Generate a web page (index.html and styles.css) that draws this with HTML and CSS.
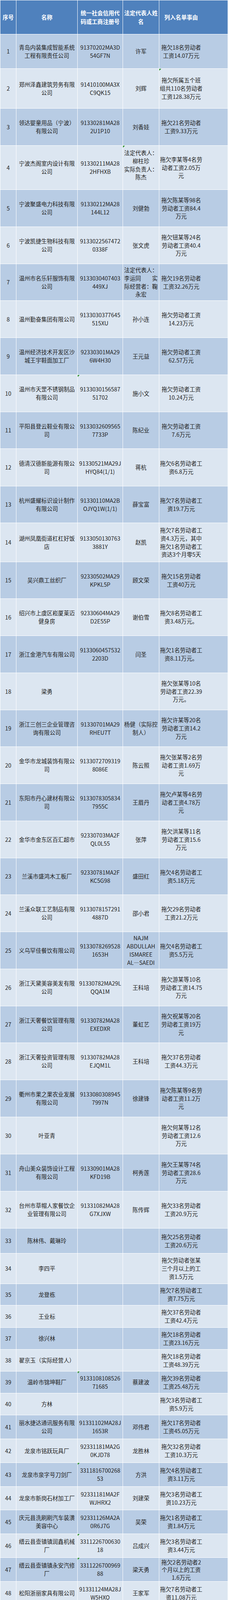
FILE: index.html
```html
<!DOCTYPE html>
<html lang="zh-CN">
<head>
<meta charset="utf-8">
<title>拖欠劳动者工资名单</title>
<link rel="stylesheet" href="styles.css">
</head>
<body>
<table class="sheet">
  <colgroup>
    <col class="k1"><col class="k2"><col class="k3"><col class="k4"><col class="k5">
  </colgroup>
  <thead>
    <tr class="head">
      <th>序号</th>
      <th>名称</th>
      <th>统一社会信用代<br>码或工商注册号</th>
      <th>法定代表人姓<br>名</th>
      <th class="c5">列入名单事由</th>
    </tr>
  </thead>
  <tbody>
    <tr class="odd h87"><td>1</td><td>青岛内装集成智能系统<br>工程有限责任公司</td><td>91370202MA3D<br>54GF7N</td><td>许军</td><td class="c5">拖欠18名劳动者<br>工资14.07万元</td></tr>
    <tr class="even h101"><td>2</td><td>郑州泽鑫建筑劳务有限<br>公司</td><td>91410100MA3X<br>C9QK15</td><td>刘辉</td><td class="c5 flag">拖欠所属五个班<br>组共110名劳动者<br>工资128.38万元</td></tr>
    <tr class="odd h94"><td>3</td><td>领达婴童用品（宁波）<br>有限公司</td><td>91330281MA28<br>2U1P10</td><td>刘香娃</td><td class="c5">拖欠21名劳动者<br>工资9.33万元</td></tr>
    <tr class="even h99"><td>4</td><td>宁波杰阁室内设计有限<br>公司</td><td>91330211MA28<br>2HFHXB</td><td class="flag lift">法定代表人：<br>柳柱珍<br>实际负责人：<br>陈杰</td><td class="c5">拖欠李某等4名劳<br>动者工资2.05万<br>元</td></tr>
    <tr class="odd h94"><td>5</td><td>宁波聚盛电力科技有限<br>公司</td><td>91330212MA28<br>144L12</td><td>刘健勃</td><td class="c5">拖欠陈某等98名<br>劳动者工资84.4<br>万元</td></tr>
    <tr class="even h94"><td>6</td><td>宁波凯捷生物科技有限<br>公司</td><td>9133022567472<br>0338F</td><td>张文虎</td><td class="c5">拖欠钮某等24名<br>劳动者工资40.4<br>万元</td></tr>
    <tr class="odd h93"><td>7</td><td>温州市名乐轩服饰有限<br>公司</td><td>9133030407403<br>449XJ</td><td>法定代表人：<br>李运同　　实<br>际经营者：鞠<br>永宏</td><td class="c5">拖欠19名劳动者<br>工资32.26万元</td></tr>
    <tr class="even h94"><td>8</td><td>温州勤奋集团有限公司</td><td>9133030377645<br>515XU</td><td>孙小连</td><td class="c5">拖欠劳动者工资<br>14.23万元</td></tr>
    <tr class="odd h94"><td>9</td><td>温州经济技术开发区沙<br>城王宇鞋面加工厂</td><td>92330301MA29<br>6W4H30</td><td>王元益</td><td class="c5">拖欠劳动者工资<br>62.57万元</td></tr>
    <tr class="even h94"><td>10</td><td>温州市天罡不锈钢制品<br>有限公司</td><td class="flag">9133030156587<br>51702</td><td>施小文</td><td class="c5">拖欠劳动者工资<br>10.24万元</td></tr>
    <tr class="odd h93"><td>11</td><td>平阳县登云鞋业有限公<br>司</td><td>9133032609565<br>7733P</td><td>陈纪业</td><td class="c5">拖欠劳动者工资<br>7.6万元</td></tr>
    <tr class="even h95"><td>12</td><td>德清汉德新能源有限公<br>司</td><td>91330521MA29J<br>HYQ84(1/1)</td><td>蒋杭</td><td class="c5">拖欠6名劳动者工<br>资6.8万元</td></tr>
    <tr class="odd h93"><td>13</td><td>杭州盛耀标识设计制作<br>有限公司</td><td>91330110MA2B<br>OJYQ1W(1/1)</td><td>薛宝富</td><td class="c5">拖欠7名劳动者工<br>资19.7万元</td></tr>
    <tr class="even h99"><td>14</td><td>湖州凤凰街道杠杠好饭<br>店</td><td>9133050130763<br>3881Y</td><td>赵凯</td><td class="c5">拖欠7名劳动者工<br>资4.3万元，其中<br>拖欠1名劳动者工<br>资达3个月零5天</td></tr>
    <tr class="odd h93"><td>15</td><td>吴兴鼎工丝织厂</td><td>92330502MA29<br>KPKL5P</td><td>顾文荣</td><td class="c5">拖欠15名劳动者<br>工资40万元</td></tr>
    <tr class="even h94"><td>16</td><td>绍兴市上虞区崧厦莱迈<br>健身房</td><td>92330604MA29<br>D2E55P</td><td>谢伯雪</td><td class="c5">拖欠8名劳动者工<br>资3.48万元。</td></tr>
    <tr class="odd h94"><td>17</td><td>浙江金港汽车有限公司</td><td>9133060457532<br>2203D</td><td>闫圣</td><td class="c5">拖欠1名劳动者工<br>资8.11万元。</td></tr>
    <tr class="even h94"><td>18</td><td>梁勇</td><td></td><td></td><td class="c5">拖欠张某等10名<br>劳动者工资22.39<br>万元。</td></tr>
    <tr class="odd h93"><td>19</td><td>浙江三创三企业管理咨<br>询有限公司</td><td>91330701MA29<br>RHEU7T</td><td>杨健（实际控<br>制人）</td><td class="c5">拖欠许某等20名<br>劳动者工资14.2<br>万元</td></tr>
    <tr class="even h94"><td>20</td><td>金华市龙城装饰有限公<br>司</td><td>9133072709319<br>8086E</td><td>陈云照</td><td class="c5">拖欠张某等2名劳<br>动者工资1.69万<br>元</td></tr>
    <tr class="odd h94"><td>21</td><td>东阳市丹心建材有限公<br>司</td><td>9133078305834<br>7955C</td><td>王眉丹</td><td class="c5">拖欠卢某等4名劳<br>动者工资4.78万<br>元</td></tr>
    <tr class="even h94"><td>22</td><td>金华市金东区百汇超市</td><td>92330703MA2F<br>QL0L55</td><td>张萍</td><td class="c5">拖欠洪某等11名<br>劳动者工资15.6<br>万元</td></tr>
    <tr class="odd h93"><td>23</td><td>兰溪市盛鸿木工板厂</td><td>92330781MA2F<br>KC5G98</td><td>盛田红</td><td class="c5">拖欠4名劳动者工<br>资5.18万元</td></tr>
    <tr class="even h94"><td>24</td><td>兰溪众联工艺制品有限<br>公司</td><td>9133078157291<br>4887D</td><td>邵小君</td><td class="c5">拖欠29名劳动者<br>工资21.2万元</td></tr>
    <tr class="odd h94"><td>25</td><td>义乌罕佳餐饮有限公司</td><td>9133078269528<br>1653H</td><td>NAJM<br>ABDULLAH<br>ISMAREE<br>AL—SAEDI</td><td class="c5">拖欠4名劳动者工<br>资5.5万元</td></tr>
    <tr class="even h94"><td>26</td><td>浙江天黛美容美发有限<br>公司</td><td>91330782MA29L<br>QQA1M</td><td>王科培</td><td class="c5">拖欠游某等10名<br>劳动者工资14.75<br>万元</td></tr>
    <tr class="odd h93"><td>27</td><td>浙江天奢餐饮管理有限<br>公司</td><td>91330782MA28<br>EXEDXR</td><td>董虹艺</td><td class="c5">拖欠祝某等20名<br>劳动者工资19万<br>元</td></tr>
    <tr class="even h94"><td>28</td><td>浙江天奢投资管理有限<br>公司</td><td>91330782MA28<br>EJQM1L</td><td>王科培</td><td class="c5">拖欠37名劳动者<br>工资44.3万元</td></tr>
    <tr class="odd h94"><td>29</td><td>衢州市果之果农业发展<br>有限公司</td><td>9133080308945<br>7997N</td><td>徐建锋</td><td class="c5">拖欠陈某等9名劳<br>动者工资11.2万<br>元</td></tr>
    <tr class="even h94"><td>30</td><td>叶亚青</td><td></td><td></td><td class="c5">拖欠何某等12名<br>劳动者工资12.6<br>万元</td></tr>
    <tr class="odd h94"><td>31</td><td>舟山美众装饰设计工程<br>有限公司</td><td>91330901MA28<br>KFD19B</td><td>柯秀莲</td><td class="c5">拖欠王某等74名<br>劳动者工资28.6<br>万元</td></tr>
    <tr class="even h94"><td>32</td><td>台州市草帽人家餐饮企<br>业管理有限公司</td><td>91331082MA28<br>G7XJXW</td><td>陈传辉</td><td class="c5">拖欠33名劳动者<br>工资20.9万元</td></tr>
    <tr class="odd h63"><td>33</td><td>陈林伟、戴琳玲</td><td></td><td></td><td class="c5">拖欠25名劳动者<br>工资20.6万元</td></tr>
    <tr class="even h77"><td>34</td><td>李四平</td><td></td><td></td><td class="c5">拖欠劳动者张某<br>三个月以上的工<br>资1.5万元</td></tr>
    <tr class="odd h54"><td>35</td><td>龙登栋</td><td></td><td></td><td class="c5">拖欠7名劳动者工<br>资7.75万元</td></tr>
    <tr class="even h56"><td>36</td><td>王业标</td><td></td><td></td><td class="c5">拖欠37名劳动者<br>工资42.4万元</td></tr>
    <tr class="odd h55"><td>37</td><td>徐兴林</td><td></td><td></td><td class="c5">拖欠18名劳动者<br>工资23.16万元</td></tr>
    <tr class="even h55"><td>38</td><td>翟京玉（实际经营人）</td><td></td><td></td><td class="c5">拖欠18名劳动者<br>工资48.39万元</td></tr>
    <tr class="odd h55"><td>39</td><td>温岭市锦坤鞋厂</td><td class="flag">9133108108526<br>71685</td><td>蔡建波</td><td class="c5">拖欠39名劳动者<br>工资25.48万元</td></tr>
    <tr class="even h55"><td>40</td><td>方林</td><td></td><td></td><td class="c5">拖欠3名劳动者工<br>资5.9万元</td></tr>
    <tr class="odd h60"><td>41</td><td>丽水捷达通讯服务有限<br>公司</td><td>91331102MA28J<br>1653R</td><td>邓伟君</td><td class="c5">拖欠17名劳动者<br>工资45.05万元</td></tr>
    <tr class="even h60"><td>42</td><td>龙泉市铭跃玩具厂</td><td>92331181MA2G<br>0KJD78</td><td>龙胜林</td><td class="c5">拖欠32名劳动者<br>工资10.3万元</td></tr>
    <tr class="odd h60"><td>43</td><td>龙泉市泉字号刀剑厂</td><td class="flag">3311816700268<br>53</td><td>方洪</td><td class="c5">拖欠4名劳动者工<br>资3.11万元</td></tr>
    <tr class="even h59"><td>44</td><td>龙泉市新岗石材加工厂</td><td>92331181MA2F<br>WJHRX2</td><td>刘建荣</td><td class="c5">拖欠3名劳动者工<br>资10.23万元</td></tr>
    <tr class="odd h60"><td>45</td><td>庆元县洗刷刷汽车装潢<br>美容中心</td><td>92331126MA2A<br>0R6J7G</td><td>吴荣</td><td class="c5">拖欠1名劳动者工<br>资1.84万元</td></tr>
    <tr class="even h60"><td>46</td><td>缙云县壶镇镇润鑫机械<br>厂</td><td class="flag">3311226700630<br>18</td><td>吕成兴</td><td class="c5">拖欠3名劳动者工<br>资3.44万元</td></tr>
    <tr class="odd h60"><td>47</td><td>缙云县壶镇镇永安汽修<br>厂</td><td class="flag">3311226700969<br>88</td><td>梁天勇</td><td class="c5 tight">拖欠2名劳动者2<br>个月以上的工资<br>1.6万元</td></tr>
    <tr class="even h59"><td>48</td><td>松阳浙丽家具有限公司</td><td>91331124MA28J<br>W5HXO</td><td>王家军</td><td class="c5">拖欠7名劳动者工<br>资11.08万元</td></tr>
  </tbody>
</table>
</body>
</html>
```

FILE: styles.css
```css
html, body {
  margin: 0;
  padding: 0;
  background: #ffffff;
}

body {
  font-family: "Noto Sans CJK SC", "Noto Sans", sans-serif;
  font-size: 14.3px;
  color: #222222;
}

.sheet {
  width: 584px;
  table-layout: fixed;
  border-collapse: separate;
  border-spacing: 1px;
  background: #ffffff;
}

.k1 { width: 40px; }
.k2 { width: 156px; }
.k3 { width: 115px; }
.k4 { width: 92px; }
.k5 { width: 175px; }

th, td {
  padding: 0;
  text-align: center;
  vertical-align: middle;
  white-space: nowrap;
  line-height: 20.9px;
}

td.c5, th.c5 {
  padding-right: 63px;
}

.head th {
  height: 86px;
  background: #4f81bd;
  color: #ffffff;
  font-weight: 700;
  line-height: 22.2px;
}

.odd td {
  background: #b8cce4;
}

.even td {
  background: #dce6f1;
}

.lift {
  padding-bottom: 13px;
}

.tight {
  line-height: 19.6px;
}

.flag {
  position: relative;
}

.flag::before {
  content: "";
  position: absolute;
  left: 0;
  top: 0;
  border-top: 5px solid #1f8a1f;
  border-right: 5px solid transparent;
}

.h54 td { height: 54px; }
.h55 td { height: 55px; }
.h56 td { height: 56px; }
.h59 td { height: 59px; }
.h60 td { height: 60px; }
.h63 td { height: 63px; }
.h77 td { height: 77px; }
.h87 td { height: 87px; }
.h93 td { height: 93px; }
.h94 td { height: 94px; }
.h95 td { height: 95px; }
.h99 td { height: 99px; }
.h101 td { height: 101px; }
```
